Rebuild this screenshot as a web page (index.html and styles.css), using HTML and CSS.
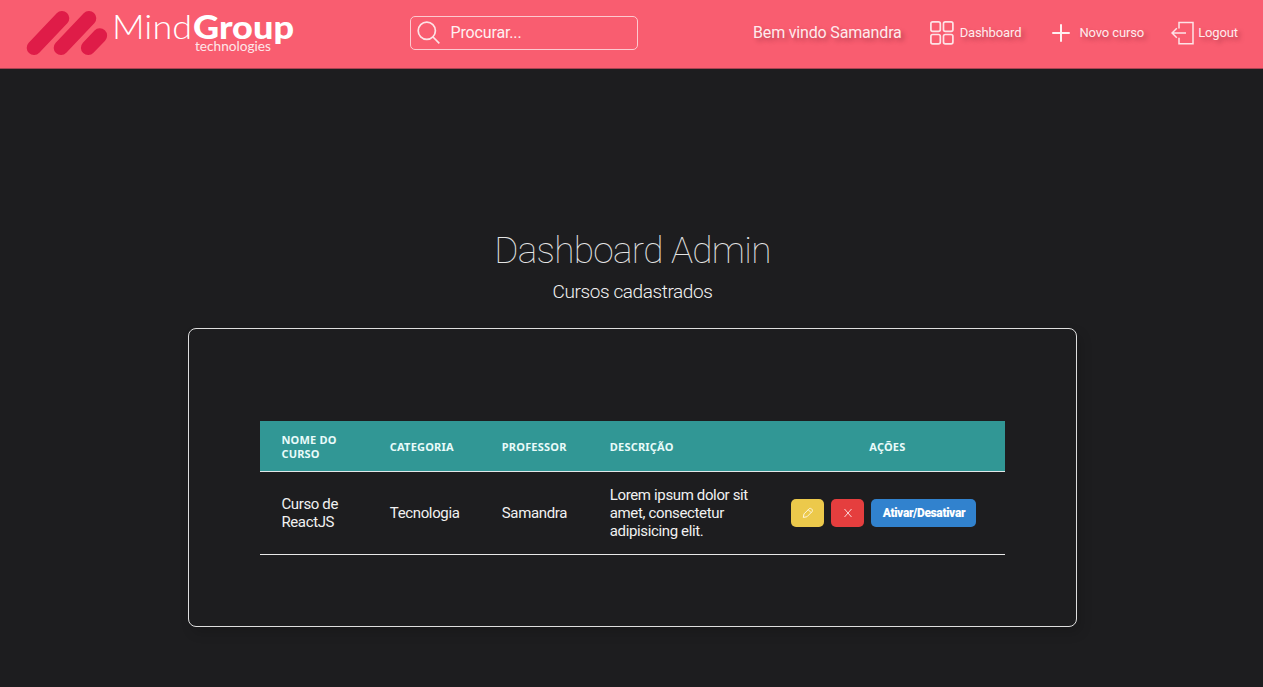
FILE: index.html
```html
<!DOCTYPE html>
<html lang="pt-BR">
<head>
<meta charset="utf-8">
<title>Dashboard Admin</title>
<link rel="stylesheet" href="styles.css">
</head>
<body>
<header class="topbar">
  <svg class="logo" width="272" height="58" viewBox="24 4 272 58" role="img" aria-label="MindGroup technologies">
    <g stroke="#df1c48" stroke-width="14.6" stroke-linecap="round">
      <path d="M34 47.8 62 18.3"/><path d="M61 47.8 89 18.3"/><path d="M88.2 47.8 99.8 35.6"/>
    </g>
    <g fill="#fff">
      <text class="logo-mind" x="112" y="38.8" textLength="80" lengthAdjust="spacingAndGlyphs">Mind</text>
      <text class="logo-group" x="193" y="38.8" textLength="101" lengthAdjust="spacingAndGlyphs">Group</text>
      <text class="logo-sub" x="195" y="51.3" textLength="76" lengthAdjust="spacingAndGlyphs">technologies</text>
    </g>
  </svg>
  <label class="search">
    <svg width="24" height="24" viewBox="0 0 24 24" fill="none" stroke="#fde3e6" stroke-width="1.7"><circle cx="9.8" cy="9.8" r="8.6"/><path d="m16 16 6.3 6.3"/></svg>
    <span>Procurar...</span>
  </label>
  <nav class="nav">
    <span class="welcome">Bem vindo Samandra</span>
    <a class="link dashboard">
      <svg width="24" height="24" viewBox="0 0 24 24" fill="none" stroke="#fde3e6" stroke-width="1.7"><rect x=".9" y=".9" width="9.4" height="9.4" rx="1.8"/><rect x="13.5" y=".9" width="9.4" height="9.4" rx="1.8"/><rect x=".9" y="13.5" width="9.4" height="9.4" rx="1.8"/><rect x="13.5" y="13.5" width="9.4" height="9.4" rx="1.8"/></svg>
      <span>Dashboard</span>
    </a>
    <a class="link new">
      <svg width="18" height="18" viewBox="0 0 18 18" fill="none" stroke="#fff0f1" stroke-width="2" stroke-linecap="round"><path d="M9 1v16M1 9h16"/></svg>
      <span>Novo curso</span>
    </a>
    <a class="link logout">
      <svg width="23" height="24" viewBox="0 0 23 24" fill="none" stroke="#fde3e6" stroke-width="1.5"><path d="M8 7.5V1.4h14v21.4H8v-6M15 12H1.2M5.8 7.3 1 12l4.8 4.7"/></svg>
      <span>Logout</span>
    </a>
  </nav>
</header>
<main class="page">
  <h1 class="title">Dashboard Admin</h1>
  <p class="subtitle">Cursos cadastrados</p>
  <section class="panel">
    <table class="courses">
      <colgroup><col class="c-name"><col class="c-cat"><col class="c-prof"><col class="c-desc"><col class="c-act"></colgroup>
      <thead><tr><th>Nome do curso</th><th>Categoria</th><th>Professor</th><th>Descrição</th><th class="center">Ações</th></tr></thead>
      <tbody><tr>
        <td>Curso de ReactJS</td><td>Tecnologia</td><td>Samandra</td><td>Lorem ipsum dolor sit amet, consectetur adipisicing elit.</td>
        <td class="action-cell"><div class="actions">
          <button class="btn edit" aria-label="Editar"><svg width="12" height="12" viewBox="0 0 12 12" fill="none" stroke="#fff6dc" stroke-width="1" stroke-linejoin="round"><path d="m1.3 10.4.7-3.5 5.2-5.2c1.6-1.2 4.1 1 2.9 2.9L4.9 9.8zM6.3 2.8l2.8 2.8"/></svg></button>
          <button class="btn remove" aria-label="Excluir"><svg width="10" height="10" viewBox="0 0 10 10" fill="none" stroke="#ffe6e6" stroke-width=".9"><path d="m1.5 1 7 8M8.5 1l-7 8"/></svg></button>
          <button class="btn toggle">Ativar/Desativar</button>
        </div></td>
      </tr></tbody>
    </table>
  </section>
</main>
</body>
</html>
```
FILE: styles.css
```css
* { box-sizing: border-box; }
body {
  margin: 0;
  height: 687px;
  overflow: hidden;
  background: #1d1d1f;
  color: #f1f1f1;
  font-family: Roboto, "Liberation Sans", sans-serif;
}
.topbar {
  display: flex;
  align-items: center;
  height: 69px;
  padding: 0 25px 3px 24px;
  background: #f95d70;
  border-bottom: 1px solid #a94352;
}
.logo { flex: none; margin-top: 1px; overflow: visible; }
.logo-mind { font: 300 33px Lato, sans-serif; }
.logo-group { font: 900 33px Lato, sans-serif; }
.logo-sub { font: 400 12.5px Lato, sans-serif; opacity: .85; }
.search {
  display: flex;
  align-items: center;
  gap: 10px;
  width: 228px;
  height: 34px;
  margin-left: 113.5px;
  padding-left: 6px;
  border: 1px solid #fdc9cf;
  border-radius: 5px;
  color: #fff0f1;
  font-size: 16px;
  letter-spacing: -.15px;
}
.nav {
  display: flex;
  align-items: center;
  margin-left: auto;
  color: #ffebed;
  text-shadow: 3px 3px 4px rgba(90, 20, 35, .35);
}
.welcome { font-size: 16px; letter-spacing: -.17px; }
.link { display: flex; align-items: center; font-size: 13px; font-weight: 450; letter-spacing: -.12px; }
.dashboard { margin-left: 28px; gap: 6px; }
.new { margin-left: 31px; gap: 9px; }
.logout { margin-left: 27px; gap: 4px; }
.page { padding-top: 159px; }
.title {
  margin: 0 0 0 2px;
  color: #e4e4e4;
  font-size: 37px;
  font-weight: 100;
  letter-spacing: -.7px;
  line-height: 46px;
  text-align: center;
}
.subtitle {
  margin: 6px 0 0 2px;
  font-size: 19px;
  font-weight: 300;
  letter-spacing: -.4px;
  line-height: 24px;
  text-align: center;
}
.panel {
  width: 889px;
  height: 299px;
  margin: 24px 0 0 188.4px;
  padding: 92px 71px 0;
  border: 1px solid #dedede;
  border-radius: 8px;
  box-shadow: 4px 6px 12px rgba(0, 0, 0, .15);
}
.courses { width: 745px; border-collapse: collapse; table-layout: fixed; }
.c-name { width: 109px; }
.c-cat { width: 112px; }
.c-prof { width: 108px; }
.c-desc { width: 180px; }
.courses th {
  height: 50px;
  padding: 3px 10px 0 20.4px;
  background: #319795;
  border-bottom: 1px solid #e2e8e8;
  color: #e9fbfa;
  font: 700 11px/14px "Noto Sans", sans-serif;
  letter-spacing: .2px;
  text-align: left;
  text-transform: uppercase;
}
.courses .center { padding: 3px 0 0; text-align: center; }
.courses td {
  height: 83px;
  padding: 0 10px 0 20.4px;
  border-bottom: 1px solid #e8e8e8;
  font-size: 15px;
  letter-spacing: -.36px;
  line-height: 18px;
}
.courses td:first-child, .courses th:first-child { padding-left: 21px; padding-right: 30px; }
.courses .action-cell { padding: 0 0 0 22px; }
.actions { display: flex; gap: 7px; }
.btn {
  display: flex;
  align-items: center;
  justify-content: center;
  width: 33px;
  height: 28px;
  padding: 0;
  border: 0;
  border-radius: 5px;
  color: #fff;
}
.edit { background: #ecc94b; }
.remove { background: #e53e3e; }
.toggle {
  width: 105px;
  background: #3182ce;
  font: 900 12px Roboto, sans-serif;
  letter-spacing: -.35px;
}
```
